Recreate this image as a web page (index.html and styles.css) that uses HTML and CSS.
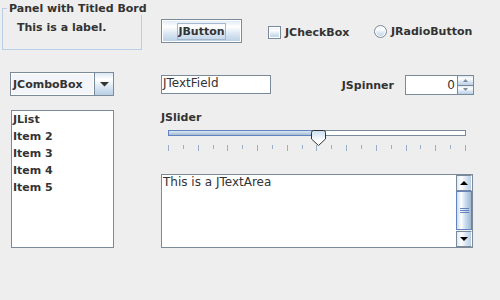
FILE: index.html
```html
<!DOCTYPE html>
<html lang="en">
<head>
    <meta charset="UTF-8">
    <title>Swing components</title>
    <link rel="stylesheet" href="styles.css">
</head>
<body>
    <div class="row top-row">
        <div class="titled">
            <div class="titled-line">This is a label.</div>
            <span class="titled-caption">Panel with Titled Bord</span>
        </div>
        <div class="btn gloss"><span class="btn-focus">JButton</span></div>
        <div class="check"><span class="check-box gloss"></span>JCheckBox</div>
        <div class="radio"><span class="radio-dot gloss"></span>JRadioButton</div>
    </div>

    <div class="row mid-row">
        <div class="combo">
            <span class="combo-value">JComboBox</span>
            <span class="combo-arrow gloss">
                <svg width="9" height="5" viewBox="0 0 9 5"><polygon points="0,0 9,0 4.5,4.5" fill="#333"/></svg>
            </span>
        </div>
        <div class="field">JTextField</div>
        <div class="spin-group">
            <span class="spin-label">JSpinner</span>
            <div class="spinner">
                <span class="spin-value">0</span>
                <div class="spin-btns">
                    <span class="spin-btn gloss">
                        <svg width="5" height="3" viewBox="0 0 5 3"><polygon points="2.5,0 5,3 0,3" fill="#7a8a99"/></svg>
                    </span>
                    <span class="spin-btn gloss">
                        <svg width="5" height="3" viewBox="0 0 5 3"><polygon points="0,0 5,0 2.5,3" fill="#7a8a99"/></svg>
                    </span>
                </div>
            </div>
        </div>
    </div>

    <div class="row bottom-row">
        <ul class="list">
            <li>JList</li>
            <li>Item 2</li>
            <li>Item 3</li>
            <li>Item 4</li>
            <li>Item 5</li>
        </ul>
        <div class="right-col">
            <div class="slider-label">JSlider</div>
            <div class="slider">
                <div class="track">
                    <span class="track-fill"></span>
                    <span class="track-rest"></span>
                </div>
                <svg class="thumb" width="15" height="16" viewBox="0 0 15 16">
                    <defs>
                        <linearGradient id="tg" x1="0" y1="0" x2="0" y2="1">
                            <stop offset="0" stop-color="#c8ddf2"/>
                            <stop offset="0.7" stop-color="#ffffff"/>
                        </linearGradient>
                    </defs>
                    <path d="M2.5 0.5 H12.5 Q14.5 0.5 14.5 2.5 V9 L7.5 15.5 L0.5 9 V2.5 Q0.5 0.5 2.5 0.5 Z" fill="url(#tg)" stroke="#333" stroke-width="1"/>
                </svg>
                <div class="ticks">
                    <i class="major"></i><i></i><i class="major"></i><i></i><i class="major"></i><i></i><i class="major"></i>
                    <i></i><i class="major"></i><i></i><i class="major"></i><i></i><i class="major"></i><i></i>
                    <i class="major"></i><i></i><i class="major"></i><i></i><i class="major"></i><i></i><i class="major"></i>
                </div>
            </div>
            <div class="scroll-pane">
                <div class="text-area">This is a JTextArea</div>
                <div class="scrollbar">
                    <span class="sb-btn gloss-h">
                        <svg width="8" height="4" viewBox="0 0 8 4"><polygon points="4,0 8,4 0,4" fill="#000"/></svg>
                    </span>
                    <span class="sb-thumb">
                        <i></i><i></i><i></i>
                    </span>
                    <span class="sb-btn gloss-h">
                        <svg width="8" height="4" viewBox="0 0 8 4"><polygon points="0,0 8,0 4,4" fill="#000"/></svg>
                    </span>
                </div>
            </div>
        </div>
    </div>
</body>
</html>
```

FILE: styles.css
```css
*{
    margin: 0;
    padding: 0;
    box-sizing: border-box;
}
body{
    width: 500px;
    height: 300px;
    overflow: hidden;
    background: #eeeeee;
    color: #333333;
    font: bold 11px/13px "DejaVu Sans", sans-serif;
}
ul{
    list-style: none;
}
.row{
    display: flex;
    align-items: flex-start;
}
.gloss{
    background: linear-gradient(#dde8f3, #ffffff 30%, #dde8f3 60%, #b8cfe5);
}
.gloss-h{
    background: linear-gradient(to right, #dde8f3, #ffffff 30%, #dde8f3 60%, #b8cfe5);
}

/* first row */
.top-row{
    height: 52px;
}
.titled{
    position: relative;
    flex: none;
    width: 144px;
    height: 52px;
}
.titled-line{
    margin: 8px 2px 0;
    height: 42px;
    border: 1px solid #b8cfe5;
    padding: 12px 0 0 14px;
}
.titled-caption{
    position: absolute;
    left: 7px;
    top: 2px;
    padding: 0 0 0 2px;
    background: #eeeeee;
    white-space: nowrap;
}
.btn{
    margin: 19px 0 0 17px;
    width: 81px;
    height: 24px;
    border: 1px solid #7a8a99;
    box-shadow: inset 0 0 0 1px #ffffff;
    display: flex;
    align-items: center;
    justify-content: center;
}
.btn-focus{
    width: 49px;
    height: 17px;
    border: 1px solid #a3b8cc;
    display: flex;
    align-items: center;
    justify-content: center;
}
.check, .radio{
    height: 24px;
    display: flex;
    align-items: center;
    gap: 4px;
    white-space: nowrap;
}
.check{
    margin: 20px 0 0 26px;
    width: 106px;
}
.radio{
    margin-top: 19px;
}
.check-box, .radio-dot{
    width: 13px;
    height: 13px;
    border: 1px solid #7a8a99;
    box-shadow: inset 0 0 0 1px #ffffff;
}
.radio-dot{
    border-radius: 50%;
}

/* second row */
.mid-row{
    margin-top: 20px;
}
.combo{
    margin-left: 10px;
    width: 104px;
    height: 24px;
    border: 1px solid #7a8a99;
    display: flex;
}
.combo-value{
    flex: 1;
    display: flex;
    align-items: center;
    padding-left: 2px;
    background: #f3f5f8;
    box-shadow: inset 0 0 0 1px #ffffff;
}
.combo-arrow{
    width: 19px;
    border-left: 1px solid #7a8a99;
    display: flex;
    align-items: center;
    justify-content: center;
}
.field{
    margin: 3px 0 0 47px;
    width: 110px;
    height: 19px;
    border: 1px solid #7a8a99;
    background: #ffffff;
    padding-left: 1px;
    font-weight: normal;
    font-size: 12px;
    line-height: 14px;
}
.spin-group{
    margin: 3px 26px 0 auto;
    display: flex;
    align-items: center;
}
.spin-label{
    margin-right: 11px;
}
.spinner{
    width: 69px;
    height: 20px;
    border: 1px solid #7a8a99;
    background: #ffffff;
    display: flex;
}
.spin-value{
    flex: 1;
    display: flex;
    align-items: center;
    justify-content: flex-end;
    padding-right: 2px;
    font-weight: normal;
    font-size: 12px;
}
.spin-btns{
    width: 16px;
    display: flex;
    flex-direction: column;
    border-left: 1px solid #7a8a99;
}
.spin-btn{
    flex: 1;
    display: flex;
    align-items: center;
    justify-content: center;
}
.spin-btn + .spin-btn{
    border-top: 1px solid #7a8a99;
}

/* third row */
.bottom-row{
    margin-top: 14px;
}
.list{
    margin-left: 11px;
    width: 103px;
    height: 138px;
    border: 1px solid #7a8a99;
    background: #ffffff;
    padding-left: 1px;
    line-height: 17px;
}
.right-col{
    margin-left: 47px;
    width: 312px;
}
.slider-label{
    margin-top: 1px;
}
.slider{
    position: relative;
    margin-top: 6px;
    height: 26px;
}
.track{
    margin: 5px 0 0 7px;
    width: 298px;
    height: 6px;
    display: flex;
}
.track-fill{
    width: 151px;
    border: 1px solid #6382bf;
    border-right: none;
    background: linear-gradient(#dde8f3, #b8cfe5 60%, #a3b8cc);
}
.track-rest{
    flex: 1;
    border: 1px solid #7a8a99;
    border-left: none;
    background: #ffffff;
}
.thumb{
    position: absolute;
    left: 150px;
    top: 0;
}
.ticks{
    margin: 9px 0 0 7px;
    width: 298px;
    height: 6px;
    display: flex;
    justify-content: space-between;
    align-items: flex-start;
}
.ticks i{
    width: 1px;
    height: 4px;
    background: #9ab0c6;
}
.ticks i.major{
    height: 6px;
}
.scroll-pane{
    margin-top: 18px;
    height: 74px;
    border: 1px solid #7a8a99;
    display: flex;
}
.text-area{
    flex: 1;
    background: #ffffff;
    padding-left: 1px;
    font-weight: normal;
    font-size: 12px;
    line-height: 15px;
}
.scrollbar{
    width: 16px;
    display: flex;
    flex-direction: column;
    background: #eeeeee;
}
.sb-btn{
    height: 16px;
    border: 1px solid #7a8a99;
    border-right-color: #ffffff;
    display: flex;
    align-items: center;
    justify-content: center;
}
.sb-thumb{
    flex: 1;
    margin-bottom: 1px;
    border: 1px solid #6382bf;
    background: linear-gradient(to right, #c8ddf2, #ffffff 30%, #c8ddf2 60%, #a3b8cc);
    display: flex;
    flex-direction: column;
    align-items: center;
    justify-content: center;
    gap: 1px;
}
.sb-thumb i{
    width: 9px;
    height: 1px;
    background: #6382bf;
}
```
